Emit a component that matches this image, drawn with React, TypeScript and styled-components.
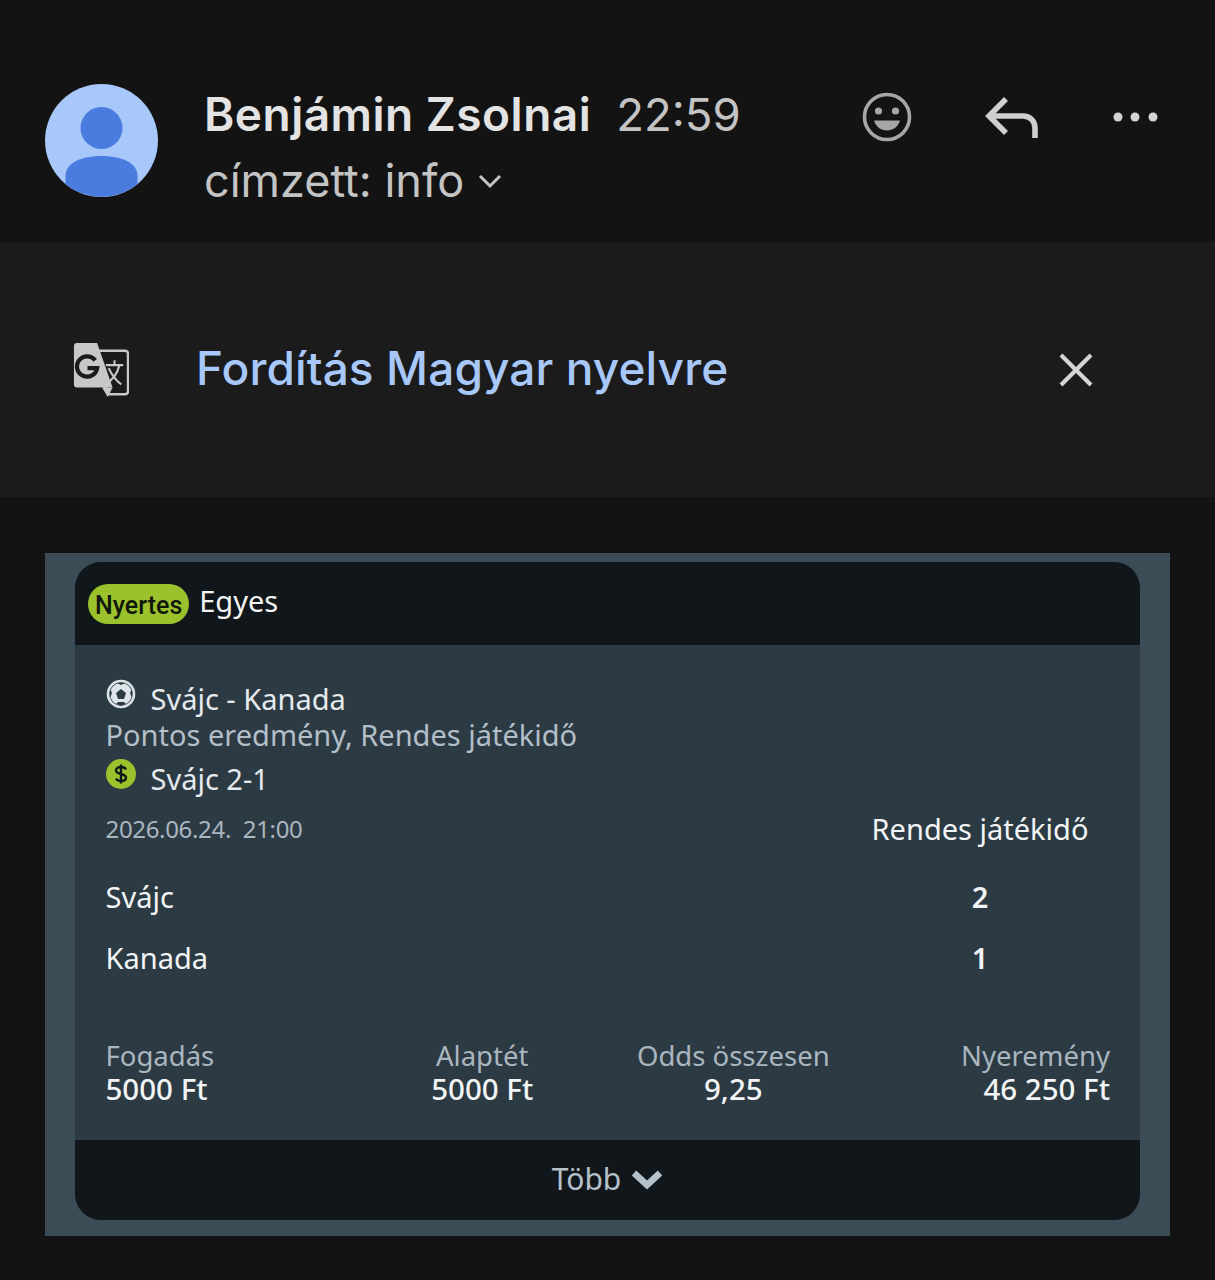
import React from 'react';
import styled, { createGlobalStyle } from 'styled-components';

const GlobalStyle = createGlobalStyle`
  html, body { margin: 0; padding: 0; background: #131314; }
  body { width: 1215px; height: 1280px; overflow: hidden; font-family: Inter, Roboto, "Liberation Sans", sans-serif; }
`;

const Page = styled.div`
  width: 1215px;
  height: 1280px;
  background: #131314;
  display: flex;
  flex-direction: column;
`;

const Header = styled.header`
  height: 242px;
  box-sizing: border-box;
  padding: 84px 55px 0 45px;
  display: flex;
  align-items: flex-start;
`;

const Avatar = styled.svg`
  width: 113px;
  height: 113px;
  flex: none;
`;

const Sender = styled.div`
  margin-left: 46px;
  display: flex;
  flex-direction: column;
  flex: 1;
`;

const SenderRow = styled.div`
  display: flex;
  align-items: baseline;
  height: 60px;
`;

const Name = styled.span`
  font-size: 46px;
  font-weight: 600;
  letter-spacing: 0.5px;
  color: #e3e3e3;
  line-height: 60px;
`;

const Time = styled.span`
  font-size: 45.5px;
  color: #c4c4c4;
  margin-left: 25px;
  line-height: 60px;
`;

const Recipient = styled.div`
  display: flex;
  align-items: center;
  font-size: 45px;
  color: #c4c4c4;
  line-height: 60px;
  margin-top: 7px;
`;

const Actions = styled.div`
  display: flex;
  align-items: center;
  gap: 73px;
  margin-top: 8px;
`;

const TranslateBar = styled.section`
  height: 255px;
  background: #1b1b1c;
  box-sizing: border-box;
  padding: 0 121px 0 73px;
  display: flex;
  align-items: center;
`;

const TranslateLabel = styled.span`
  margin-left: 67px;
  margin-top: -3px;
  font-size: 46px;
  font-weight: 500;
  letter-spacing: 0.1px;
  color: #a8c7fa;
  flex: 1;
`;

const Mail = styled.main`
  margin: 56px 45px 0;
  background: #3c4c57;
  padding: 9px 30px 16px;
  height: 683px;
  box-sizing: border-box;
`;

const Ticket = styled.article`
  height: 658px;
  border-radius: 26px;
  overflow: hidden;
  background: #2c3a44;
  display: flex;
  flex-direction: column;
  font-family: "Noto Sans", "Open Sans", sans-serif;
  color: #f2f4f5;
`;

const TicketTop = styled.div`
  height: 83px;
  flex: none;
  background: #11161a;
  display: flex;
  align-items: center;
  padding-left: 13px;
`;

const Badge = styled.span`
  background: #9bc22c;
  color: #10170a;
  font-family: Roboto, sans-serif;
  font-size: 25px;
  font-weight: 500;
  height: 40px;
  line-height: 44px;
  padding: 0 7px;
  border-radius: 20px;
`;

const BetType = styled.span`
  font-size: 29px;
  margin-left: 10px;
  margin-top: -6px;
`;

const TicketBody = styled.div`
  flex: 1;
  padding: 33px 30px 0 30.5px;
  display: flex;
  flex-direction: column;
`;

const Line = styled.div<{ $muted?: boolean }>`
  display: flex;
  align-items: center;
  height: 40px;
  font-size: 29px;
  color: ${(p) => (p.$muted ? '#b3bfc8' : '#e6eaed')};
  position: relative;
  top: ${(p) => (p.$muted ? '-4px' : '0')};
`;

const LineIcon = styled.svg`
  width: 30px;
  height: 30px;
  margin-right: 15px;
  margin-top: -9px;
  flex: none;
`;

const ScoreHead = styled.div`
  display: flex;
  justify-content: space-between;
  align-items: center;
  height: 40px;
  margin-top: 10px;
  margin-bottom: 18px;
  padding-right: 21px;
`;

const DateText = styled.span`
  font-size: 24px;
  letter-spacing: -0.33px;
  color: #aab6bf;
`;

const PeriodLabel = styled.span`
  font-size: 29px;
  color: #f2f4f5;
  width: 218px;
  text-align: center;
`;

const ScoreRow = styled.div`
  display: grid;
  grid-template-columns: 1fr 218px;
  height: 61px;
  align-items: center;
  font-size: 29px;
  padding-right: 21px;
`;

const ScoreValue = styled.span`
  text-align: center;
  font-weight: 600;
`;

const Stats = styled.div`
  display: grid;
  grid-template-columns: repeat(4, 1fr);
  margin-top: 52px;
`;

const Stat = styled.div<{ $align: string }>`
  display: flex;
  flex-direction: column;
  text-align: ${(p) => p.$align};
`;

const StatLabel = styled.span`
  font-size: 27.5px;
  line-height: 32px;
  color: #aab6bf;
`;

const StatValue = styled.span`
  font-size: 29.5px;
  line-height: 33px;
  font-weight: 500;
  color: #f2f4f5;
`;

const TicketBottom = styled.div`
  height: 80px;
  flex: none;
  background: #11161a;
  display: flex;
  align-items: center;
  justify-content: center;
  gap: 10px;
  font-size: 30px;
  color: #b5c1ca;
  padding-bottom: 3px;
  box-sizing: border-box;
`;

const stats = [
  { label: 'Fogadás', value: '5000 Ft', align: 'left' },
  { label: 'Alaptét', value: '5000 Ft', align: 'center' },
  { label: 'Odds összesen', value: '9,25', align: 'center' },
  { label: 'Nyeremény', value: '46 250 Ft', align: 'right' },
];

const App = () => (
  <Page>
    <GlobalStyle />
    <Header>
      <Avatar viewBox="0 0 113 113">
        <circle cx="56.5" cy="56.5" r="56.5" fill="#a8c7fa" />
        <circle cx="56.5" cy="44" r="21" fill="#4a7bdf" />
        <path d="M20.5 100 V92 C20.5 78 38 72 56.5 72 C75 72 92.5 78 92.5 92 V100 A56.5 56.5 0 0 1 20.5 100 Z" fill="#4a7bdf" />
      </Avatar>
      <Sender>
        <SenderRow>
          <Name>Benjámin Zsolnai</Name>
          <Time>22:59</Time>
        </SenderRow>
        <Recipient>
          címzett: info
          <svg width="28" height="28" viewBox="0 0 28 28" style={{ marginLeft: 12 }}>
            <path d="M4 9 L14 19 L24 9" fill="none" stroke="#c4c4c4" strokeWidth="3" />
          </svg>
        </Recipient>
      </Sender>
      <Actions>
        <svg width="50" height="50" viewBox="0 0 50 50">
          <circle cx="25" cy="25" r="22.5" fill="none" stroke="#a6a6a6" strokeWidth="3.6" />
          <circle cx="16.5" cy="19" r="3.6" fill="#a6a6a6" />
          <circle cx="33.5" cy="19" r="3.6" fill="#a6a6a6" />
          <path d="M12 28.5 H38 C36 35 31 38.5 25 38.5 C19 38.5 14 35 12 28.5 Z" fill="#a6a6a6" />
        </svg>
        <svg width="54" height="44" viewBox="0 0 54 44">
          <path d="M21 4 L4 21 L21 38 M4 21 H38 C45 21 50 26 50 33 V43" fill="none" stroke="#cfcfcf" strokeWidth="5.6" />
        </svg>
        <svg width="48" height="14" viewBox="0 0 48 14">
          <circle cx="6" cy="7" r="4.5" fill="#d4d4d4" />
          <circle cx="23" cy="7" r="4.5" fill="#d4d4d4" />
          <circle cx="41" cy="7" r="4.5" fill="#d4d4d4" />
        </svg>
      </Actions>
    </Header>

    <TranslateBar>
      <svg width="56" height="56" viewBox="0 0 58 58">
        <path d="M24 9 H54 A3 3 0 0 1 57 12 V51 A3 3 0 0 1 54 54 H36 L33 46" fill="none" stroke="#c8c8c8" strokeWidth="2.6" />
        <path d="M4 1 H25 L41 47 H4 A3 3 0 0 1 1 44 V4 A3 3 0 0 1 4 1 Z" fill="#c8c8c8" />
        <path d="M30 47 L41 47 L36 57 Z" fill="#c8c8c8" />
        <path d="M23 19 A10.5 10.5 0 1 0 25 27 H15" fill="none" stroke="#1b1b1c" strokeWidth="4.4" />
        <path d="M34 24 H52 M43 19 V24 M48 24 C46 33 40 40 33 44 M37 27 C40 34 45 40 50 44" fill="none" stroke="#c8c8c8" strokeWidth="2.2" />
      </svg>
      <TranslateLabel>Fordítás Magyar nyelvre</TranslateLabel>
      <svg width="36" height="36" viewBox="0 0 36 36">
        <path d="M3 3 L33 33 M33 3 L3 33" stroke="#d4d4d4" strokeWidth="4.2" />
      </svg>
    </TranslateBar>

    <Mail>
      <Ticket>
        <TicketTop>
          <Badge>Nyertes</Badge>
          <BetType>Egyes</BetType>
        </TicketTop>
        <TicketBody>
          <Line>
            <LineIcon viewBox="0 0 30 30">
              <circle cx="15" cy="15" r="13" fill="#2c3a44" stroke="#dfe4e8" strokeWidth="2.6" />
              <circle cx="15" cy="15" r="11" fill="#dfe4e8" />
              <path d="M15 10 L20 14 L18 20 H12 L10 14 Z" fill="#2c3a44" />
              <path d="M11 4 L15 6 L19 4 Z M26 10 L24 14 L26 19 Z M4 10 L6 14 L4 19 Z M10 25 L12 23 H18 L20 25 L15 26.5 Z" fill="#2c3a44" />
            </LineIcon>
            Svájc - Kanada
          </Line>
          <Line $muted>Pontos eredmény, Rendes játékidő</Line>
          <Line>
            <LineIcon viewBox="0 0 30 30">
              <circle cx="15" cy="15" r="15" fill="#9bc22c" />
              <path d="M20 10.5 C19 8.5 17 8 15 8 C12 8 10 9.5 10 11.5 C10 16 20 14 20 18.5 C20 20.5 18 22 15 22 C13 22 11 21.5 10 19.5 M15 5.5 V24.5" fill="none" stroke="#11161a" strokeWidth="2.4" />
            </LineIcon>
            Svájc 2-1
          </Line>
          <ScoreHead>
            <DateText>2026.06.24.&nbsp; 21:00</DateText>
            <PeriodLabel>Rendes játékidő</PeriodLabel>
          </ScoreHead>
          <ScoreRow>
            <span>Svájc</span>
            <ScoreValue>2</ScoreValue>
          </ScoreRow>
          <ScoreRow>
            <span>Kanada</span>
            <ScoreValue>1</ScoreValue>
          </ScoreRow>
          <Stats>
            {stats.map((s) => (
              <Stat key={s.label} $align={s.align}>
                <StatLabel>{s.label}</StatLabel>
                <StatValue>{s.value}</StatValue>
              </Stat>
            ))}
          </Stats>
        </TicketBody>
        <TicketBottom>
          Több
          <svg width="32" height="22" viewBox="0 0 32 22">
            <path d="M3 5 L16 17 L29 5" fill="none" stroke="#b5c1ca" strokeWidth="6.5" />
          </svg>
        </TicketBottom>
      </Ticket>
    </Mail>
  </Page>
);

export default App;
